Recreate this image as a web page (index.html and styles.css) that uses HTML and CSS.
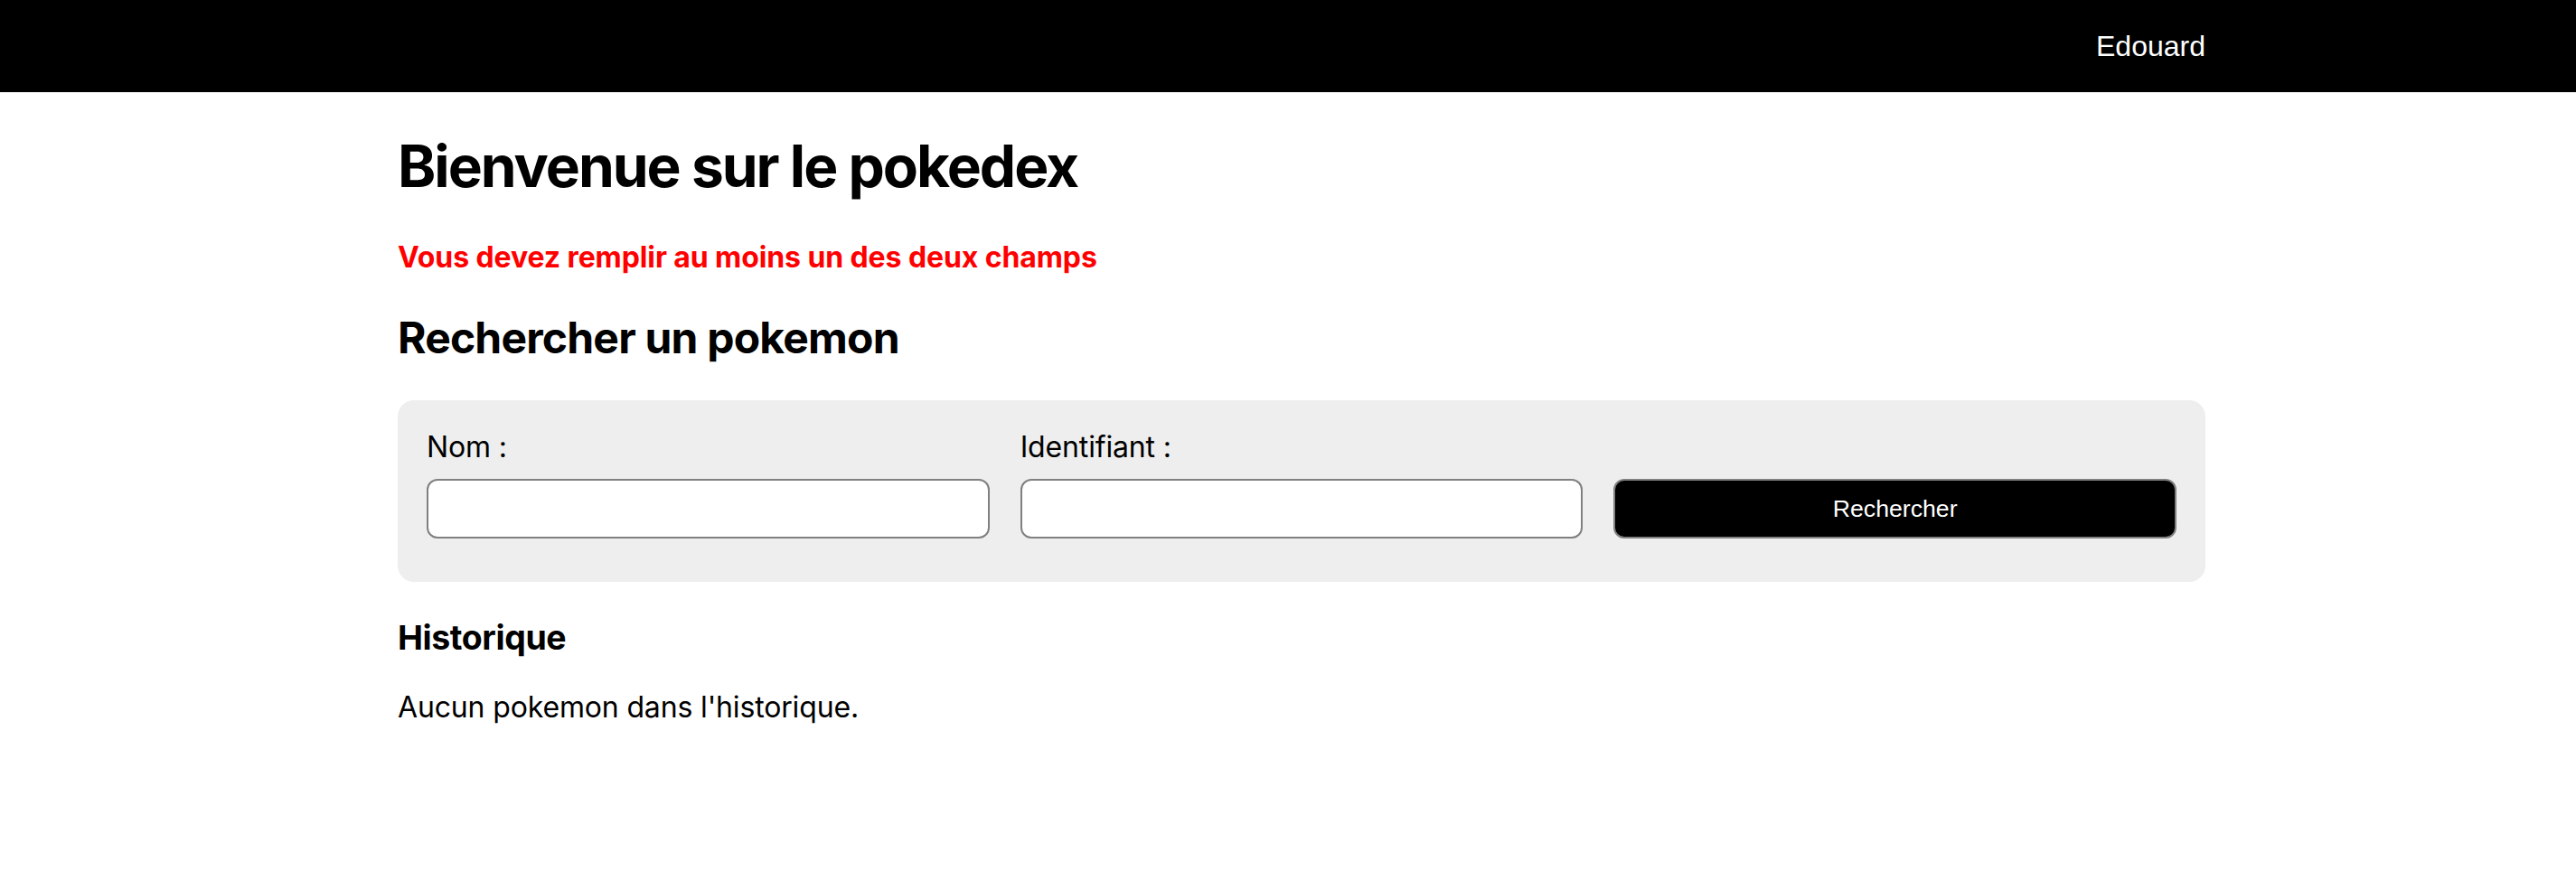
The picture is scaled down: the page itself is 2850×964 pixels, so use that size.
FILE: index.html
```html
<!DOCTYPE html>
<html lang="fr">
<head>
<meta charset="utf-8">
<title>Pokedex</title>
<link rel="stylesheet" href="styles.css">
</head>
<body>
<header class="topbar">
  <div class="topbar-inner">
    <span class="user">Edouard</span>
  </div>
</header>
<main class="container">
  <h1 class="title">Bienvenue sur le pokedex</h1>
  <p class="error">Vous devez remplir au moins un des deux champs</p>
  <h2 class="subtitle">Rechercher un pokemon</h2>
  <form class="search">
    <div class="field">
      <label class="label" for="nom">Nom :</label>
      <input class="input" id="nom" type="text">
    </div>
    <div class="field">
      <label class="label" for="ident">Identifiant :</label>
      <input class="input" id="ident" type="text">
    </div>
    <div class="field">
      <button class="btn" type="button">Rechercher</button>
    </div>
  </form>
  <h3 class="section">Historique</h3>
  <p class="empty">Aucun pokemon dans l'historique.</p>
</main>
</body>
</html>
```

FILE: styles.css
```css
html, body {
  margin: 0;
  padding: 0;
  background: #ffffff;
}

body {
  font-family: Inter, "Noto Sans", sans-serif;
  font-size: 32px;
  color: #000000;
}

.topbar {
  background: #000000;
  height: 102px;
  display: flex;
  align-items: center;
}

.topbar-inner {
  width: 2000px;
  margin-left: 440px;
  display: flex;
  justify-content: flex-end;
}

.user {
  font-family: "Liberation Sans", Arial, sans-serif;
  font-size: 32px;
  color: #ffffff;
}

.container {
  width: 2000px;
  margin-left: 440px;
}

.title {
  font-size: 64px;
  font-weight: 700;
  margin: 43px 0;
  line-height: normal;
  letter-spacing: -2px;
}

.error {
  color: #ff0000;
  font-weight: 700;
  font-size: 32px;
  margin: 32px 0;
  letter-spacing: -0.1px;
}

.subtitle {
  font-size: 48px;
  font-weight: 700;
  margin: 40px 0;
  letter-spacing: -0.8px;
}

.search {
  background: #eeeeee;
  border-radius: 18px;
  padding: 32px 32px 48px;
  display: grid;
  grid-template-columns: 1fr 1fr 1fr;
  column-gap: 34px;
  align-items: end;
}

.field {
  display: flex;
  flex-direction: column;
  gap: 16px;
}

.label {
  font-size: 32px;
  line-height: normal;
  letter-spacing: -0.15px;
}

.input {
  box-sizing: border-box;
  width: 100%;
  height: 66px;
  border: 2px solid #808080;
  border-radius: 12px;
  background: #ffffff;
  font-family: inherit;
  font-size: 26px;
  padding: 0 12px;
  margin: 0;
}

.btn {
  box-sizing: border-box;
  width: 100%;
  height: 66px;
  border: 2px solid #808080;
  border-radius: 12px;
  background: #000000;
  color: #ffffff;
  font-family: "Liberation Sans", Arial, sans-serif;
  font-size: 26.67px;
  margin: 0;
  padding: 0;
}

.section {
  font-size: 37.44px;
  font-weight: 700;
  margin: 39px 0 35px;
  letter-spacing: -0.4px;
}

.empty {
  font-size: 32px;
  margin: 32px 0;
  letter-spacing: -0.15px;
}
```
